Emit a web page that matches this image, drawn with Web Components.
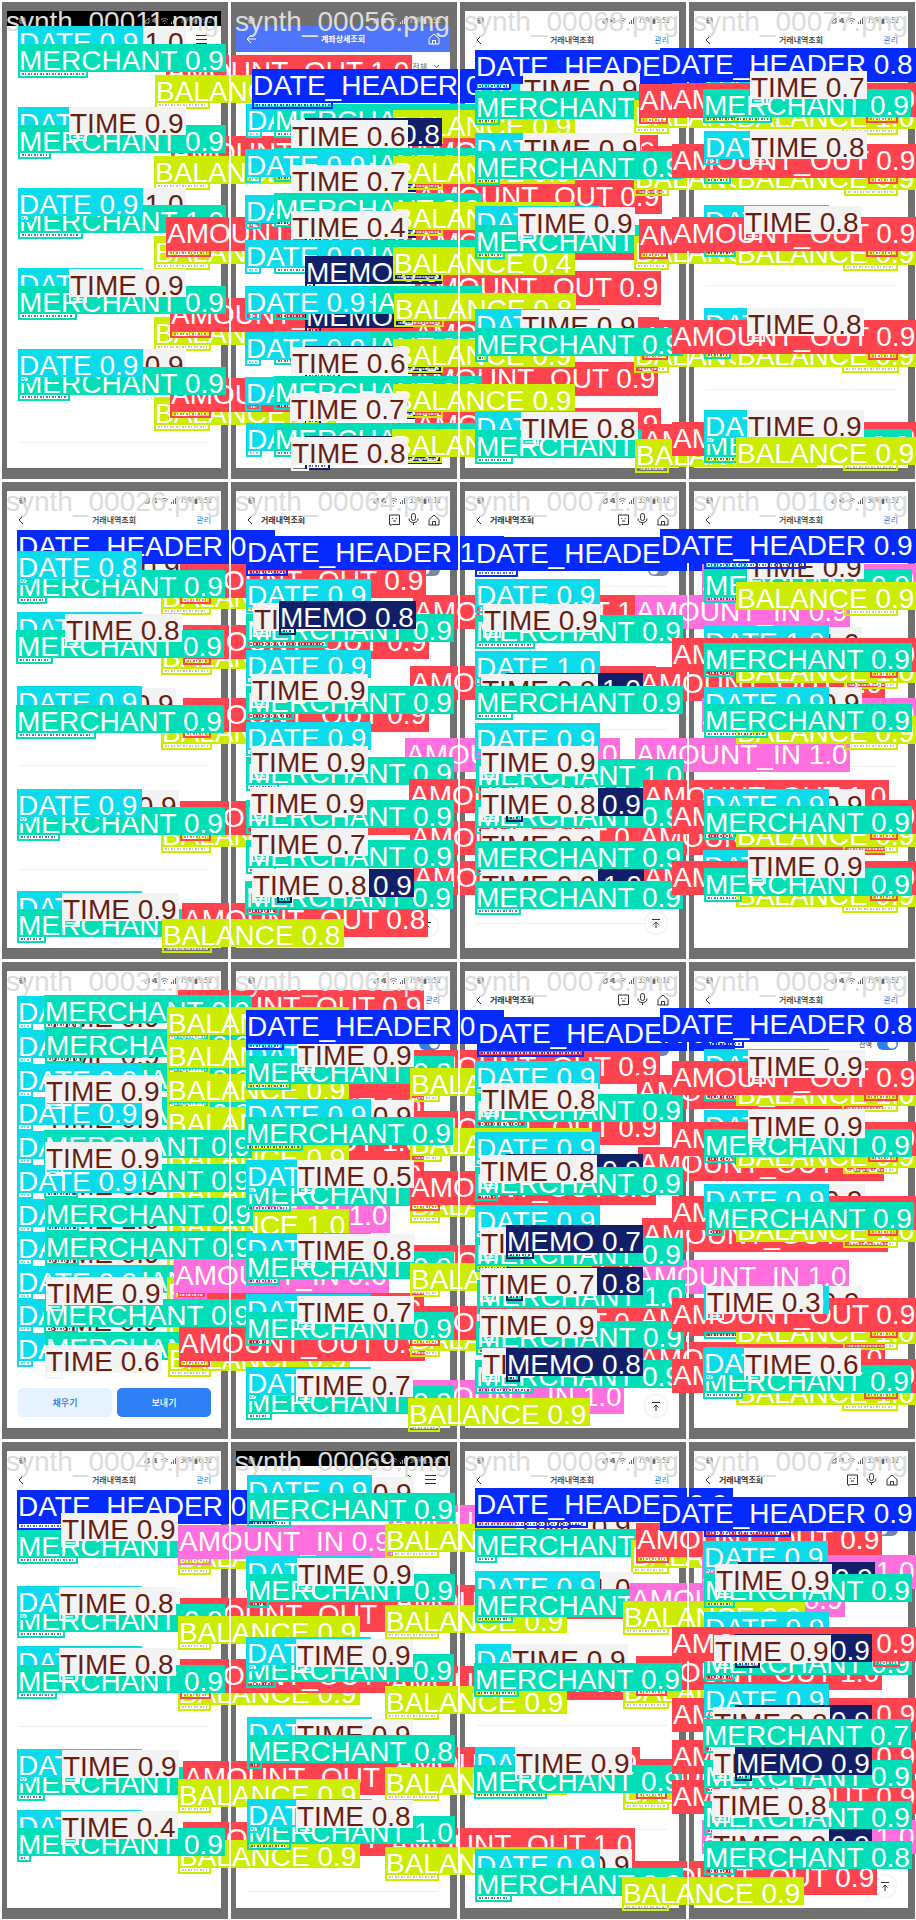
<!DOCTYPE html>
<html lang="ko">
<head>
<meta charset="utf-8">
<meta name="viewport" content="width=device-width, initial-scale=1">
<title>Validation batch predictions</title>
<style>
  body { margin: 0; background: #fff; font-family: "Liberation Sans", Arial, sans-serif; overflow-x: hidden; }
</style>
</head>
<body>
<batch-mosaic></batch-mosaic>

<template id="tpl-label">
  <style>
    :host { position: absolute; display: block; font: 28px/32px "Liberation Sans", Arial, sans-serif; white-space: nowrap; }
    .box { position: absolute; box-sizing: border-box; height: 8px; border: 2px solid var(--fill); }
    .box::before { content: ""; display: block; height: 2px; margin: 1px 2px; opacity: .7;
      background: repeating-linear-gradient(90deg, var(--ink) 0 2px, #fff 2px 3px, var(--ink) 3px 4px, #fff 4px 6px); }
    .tag { position: relative; box-sizing: border-box; padding: 1px 0 0 1px; background: var(--fill); color: var(--text); }
  </style>
  <div class="box"></div>
  <div class="tag"></div>
</template>

<template id="tpl-screen">
  <style>
    :host { display: flex; flex-direction: column; box-sizing: border-box; background: #fff; color: #333;
      font: 8px/12px "Noto Sans CJK KR", sans-serif; overflow: hidden; }
    .status { display: flex; justify-content: space-between; align-items: center; height: 15px; padding: 3px 9px 0 12px; box-sizing: border-box; font-size: 7px; color: #666; }
    .status svg { height: 7px; display: block; }
    .status span { display: flex; align-items: center; gap: 2px; }
    header { display: grid; grid-template-columns: 1fr auto 1fr; align-items: center; height: 27px; padding: 0 10px; }
    header svg { display: block; }
    h2 { margin: 0; font: inherit; font-weight: 500; color: #333; }
    a { color: #2f80d8; text-decoration: none; justify-self: end; }
    header.tools { display: flex; gap: 7px; }
    header.tools h2 { flex: 1; font-weight: 700; }
    header.tools .tool { margin-left: 2px; }
    :host([look="bank"]) .status { background: #707070; color: #ddd; }
    :host([look="bank"]) header { background: #4f76fa; color: #fff; height: 26px; }
    :host([look="bank"]) h2 { color: #fff; font-weight: 700; }
    :host([look="menu"]) .status, :host([look="menuhome"]) .status { background: #000; color: #aaa; }
    .end { justify-self: end; display: flex; gap: 11px; }
    .filter { height: 47px; display: flex; justify-content: flex-end; padding: 0 10px; box-sizing: border-box; align-items: flex-start; gap: 6px; }
    .filter.bank { padding-top: 7px; color: #666; align-items: center; height: 22px; }
    .filter label { display: flex; align-items: center; gap: 5px; padding-top: 25px; font-size: 7px; }
    .filter.low label { padding-top: 31px; }
    input { appearance: none; margin: 0; width: 21px; height: 12px; border-radius: 6px; background: radial-gradient(circle at 15px 6px, #fff 4px, #2f80e8 5px); }
    .low input { background: radial-gradient(circle at 6px 6px, #fff 4px, #7a86a0 5px); }
    .rule { box-sizing: border-box; margin: 0 12px; border-bottom: 1px solid #f0f0f0; }
    footer { margin-top: auto; display: flex; gap: 5px; padding: 0 10px 11px 11px; }
    footer button { flex: 1; height: 29px; border: 0; border-radius: 5px; padding: 0; font: 500 9px/12px "Noto Sans CJK KR", sans-serif; background: #e6f2ff; color: #2f6fd0; }
    footer button.main { background: #2f80f6; color: #fff; }
    footer.top { justify-content: flex-end; padding-right: 12px; }
    footer.top button { flex: none; width: 22px; height: 22px; border-radius: 11px; background: #fff; color: #333; box-shadow: 0 0 2px #ccc; display: grid; place-items: center; }
  </style>
  <div class="status"><span class="l"></span><span class="r"></span></div>
</template>

<template id="tpl-tile">
  <style>
    :host { position: relative; display: flex; aspect-ratio: 229 / 480; background: #707070; box-sizing: border-box; padding: 11px 8px 12px 7px; min-width: 0; }
    phone-screen { flex: 1; min-width: 0; }
    .layer { position: absolute; inset: 0; z-index: 1; box-sizing: border-box; border: solid #fff; border-width: 2px 1px 1px 2px; }
    .marks { position: absolute; left: -2px; top: -2px; }
    .name { position: absolute; left: 4px; top: 4px; font: 28px/32px "Liberation Sans", Arial, sans-serif; color: #dcdcdc; white-space: nowrap; }
  </style>
  <phone-screen></phone-screen>
  <div class="layer"><div class="name"></div><div class="marks"></div></div>
</template>

<script>
const KINDS = {
  H: { text: 'DATE_HEADER', fill: '#042aff', w: 258, h: 34, box: 40 },
  D: { text: 'DATE', fill: '#0bdbeb', w: 125, h: 28, box: 16 },
  T: { text: 'TIME', fill: '#f3f3f3', color: '#681f11', w: 117, h: 28, box: 18 },
  M: { text: 'MERCHANT', fill: '#00dfb7', w: 208, h: 28, box: 34, ink: '#245' },
  E: { text: 'MEMO', fill: '#111f68', w: 137, h: 28, box: 16 },
  I: { text: 'AMOUNT_IN', fill: '#ff6fdd', w: 215, h: 34, box: 33 },
  O: { text: 'AMOUNT_OUT', fill: '#ff444f', w: 246, h: 34, box: 31 },
  B: { text: 'BALANCE', fill: '#cced00', w: 182, h: 28, box: 54, ink: '#aa9' }
};

/* One entry per image, column by column. Each mark: kind, score, x, y, [box width, box x]. */
const TILES = [
 { name: '00011', look: 'menu', rules: [442], marks: `
  O 1.0 166 55|T 1.0 69 26|D 0.9 18 26|M 0.9 18 44 70|B 0.9 155 75 55
  D 0.9 18 107|O 0.9 171 136|M 0.9 18 125 33|B 0.9 154 156 56|T 0.9 69 107
  T 1.0 69 188|M 1.0 18 205 65|B 0.9 154 236 56|D 0.9 18 188|O 0.9 166 217 45
  D 0.9 18 268|B 0.9 154 317 57|O 0.9 170 298 41|M 0.9 18 286 59|T 0.9 69 269
  T 0.9 69 349|B 0.9 154 397 56|O 0.9 170 378 41|M 0.9 18 367 52|D 0.9 18 349` },
 { name: '00026', look: 'manage', rules: [285, 389], marks: `
  T 0.9 65 71|B 0.9 161 101 50|O 0.9 180 84|H 0.9 17 50|M 0.9 17 90 30|D 0.8 17 71
  D 0.9 17 132|B 0.9 161 161 51|O 0.9 183 145 28|M 0.9 16 150 37|T 0.8 65 134
  T 0.9 59 208|D 0.9 17 206|B 0.9 161 236 51|O 0.9 183 218 28|M 0.9 16 225 80
  T 0.9 62 310|B 0.9 161 339 50|O 0.9 180 321|M 0.9 17 327 43|D 0.9 17 309
  D 0.9 17 411|M 0.9 17 429 29|O 0.8 182 423|T 0.9 62 413|B 0.8 162 439 50` },
 { name: '00031', look: 'none', footer: 'pair', marks: `
  O 0.9 178 30|O 0.9 178 98|O 1.0 178 131|O 1.0 178 165|O 0.9 178 198|I 1.0 175 239
  T 0.9 45 41|D 0.9 17 36|M 0.9 44 35 38|T 0.9 45 79|D 0.9 17 70|M 0.9 45 69 38|B 0.9 167 47 43
  M 0.9 45 103|D 0.9 17 104|B 0.9 167 80 43
  M 0.9 45 137|B 0.9 167 114 43|T 0.9 45 142|D 0.9 17 137|B 0.9 167 147 43|T 0.9 45 115
  B 0.9 167 182 43|D 0.9 17 171|M 0.9 44 170
  B 0.9 167 216 43|T 0.9 45 209|M 0.9 44 204|D 0.9 17 205|T 0.9 45 182
  B 1.0 167 249 43|T 1.0 45 243|D 0.9 17 239|M 0.9 45 238
  B 0.9 167 283 43|T 0.9 45 277|D 0.9 17 272|M 0.9 45 271
  M 0.9 45 305|D 0.9 17 306|B 0.9 167 317 43|O 0.9 178 333|I 0.6 174 299
  B 0.9 167 350 43|T 0.9 44 345|D 0.9 17 339|M 0.9 44 339|T 0.9 46 317
  D 0.9 17 373|M 0.9 45 372|B 0.9 168 383 43|O 0.9 179 367|T 0.6 45 385` },
 { name: '00040', look: 'manage', time: '36%▮6:32', rules: [286], marks: `
  H 0.9 17 50 61|M 0.9 17 90 61|B 0.9 178 101 33|I 0.9 178 85|T 0.9 61 73
  O 0.9 180 158|M 0.9 17 164 48|D 0.9 17 146|B 0.9 178 176 33|T 0.8 59 147
  D 0.9 17 206|B 0.9 178 237 33|O 0.9 180 219|M 0.9 17 225 40|T 0.8 59 208
  M 0.9 17 327 28|D 0.9 17 309|O 0.9 183 321|B 0.9 178 339 33|T 0.9 62 310
  D 0.9 17 370|O 0.9 183 382|B 0.9 178 400 33|M 0.9 17 388 14|T 0.4 61 371` },
 { name: '00056', look: 'bank', marks: `
  E 0.9 76 164|E 0.9 76 210|E 0.9 76 391|E 0.9 76 300|O 0.9 183 135|O 0.9 187 180|O 0.9 187 226|O 0.9 186 271|O 0.9 184 317|O 0.9 183 362|O 0.9 186 408
  D 0.9 17 104|M 0.9 45 104|B 0.9 164 110 50|E 0.8 76 118 25|T 0.6 62 120
  M 0.9 45 148|D 0.9 16 149|B 0.9 164 156 50|T 0.7 62 165
  D 0.9 16 195|M 0.9 45 193|B 0.9 164 202 50|T 0.4 62 211
  M 0.9 45 240|D 0.9 16 240|E 0.9 76 256 10|B 0.4 164 247 50
  M 0.9 45 286|D 0.9 16 286|B 0.8 165 293 50
  M 0.9 45 331|D 0.9 16 332|E 0.9 76 346 35|B 0.9 164 339 50|T 0.6 62 347
  D 0.9 16 377|M 0.9 45 376|B 0.9 164 384 50|T 0.7 61 393
  D 0.9 17 423|M 0.9 45 423|E 0.8 76 436 25|B 0.9 163 429 50|T 0.8 62 437|H 0.9 23 69 81` },
 { name: '00064', look: 'tools', low: true, footer: 'top', marks: `
  O 1.0 184 115|D 0.9 17 99|M 0.9 17 134 82|T 0.9 24 123|E 0.8 50 121 17|H 1.0 17 56 42
  O 0.9 181 186|D 0.9 17 170|M 0.9 17 206 48|T 0.9 22 194
  I 1.0 176 258|D 0.9 17 242|M 0.9 17 277 33|T 0.9 22 266
  O 0.9 180 299|O 0.9 181 341|M 0.9 17 320 30|T 0.9 21 307
  O 0.9 184 381|M 0.9 17 360 30|T 0.7 22 348
  M 0.9 16 401 34|E 0.9 48 389 15|T 0.8 23 389` },
 { name: '00061', look: 'manage', toggle: true, marks: `
  O 0.9 185 90|D 0.9 17 79|M 0.9 17 96 45|T 0.9 68 79|H 0.9 17 50 38|B 0.9 181 108 30
  O 0.9 185 151|T 0.9 68 140|D 0.9 17 139|B 0.9 181 168 32|M 0.9 16 157 58
  M 0.9 17 218 45|D 0.9 17 200|B 0.9 181 229 30|O 0.9 181 211 30|T 0.5 68 200
  O 0.9 185 285|D 0.9 17 273|M 0.9 17 291 34|B 0.9 181 303 30|T 0.8 68 274
  D 0.9 17 334|B 0.9 181 363 30|O 0.9 181 346 30|M 0.9 17 352 25|T 0.7 68 336
  I 1.0 180 420|M 0.9 17 426 26|D 0.9 17 407|T 0.7 67 409|B 0.9 179 438 32` },
 { name: '00069', look: 'menuhome', time: '36%▮1:12', rules: [451], marks: `
  I 0.9 160 65|T 0.9 68 37|D 0.9 18 35|M 0.9 18 53 44|B 0.9 156 84
  O 0.9 165 145|D 0.9 17 116|M 0.9 18 134 22|B 0.9 156 165|T 0.9 68 118
  O 0.9 160 226|M 0.9 17 214 30|D 0.9 17 197|B 0.9 156 246|T 0.9 67 199
  O 0.9 165 307|D 0.9 18 277|T 0.9 67 279|M 0.8 18 295 15|B 0.9 156 327
  O 1.0 160 388|M 1.0 18 376 44|D 0.9 18 359|B 0.9 156 407|T 0.8 67 360` },
 { name: '00068', look: 'manage', marks: `
  D 0.9 17 73|H 0.9 17 50 36|T 0.9 65 73|M 0.9 17 91 25|B 0.9 176 100 35|O 0.9 181 84 29
  O 0.9 184 146 26|D 0.9 17 133|T 0.9 65 133|B 0.9 176 162 35|M 0.9 17 151 25
  D 0.9 17 206|M 0.9 17 225 30|B 0.9 176 236 35|O 0.9 181 219 29|T 0.9 60 207
  D 0.9 17 309|T 0.9 63 310|B 0.9 176 339 35|O 0.9 184 320 26|M 0.9 17 328 13
  D 0.9 17 411|M 0.9 17 430 38|O 0.9 184 424|T 0.8 63 412|B 0.9 177 439 34` },
 { name: '00071', look: 'tools', low: true, footer: 'top', rules: [106, 249, 443], marks: `
  I 0.9 177 115|D 0.9 17 99|M 0.9 17 135 60|T 0.9 25 124|H 0.9 17 57 43
  O 0.9 181 187 30|D 1.0 17 171|E 1.0 48 193|T 0.9 23 194|M 0.9 17 206 38
  I 1.0 177 258|D 0.9 17 243|M 1.0 18 279|T 0.9 23 266
  O 1.0 185 300|O 0.9 181 341|M 0.9 17 320|E 0.9 48 308 17|T 0.8 23 308
  O 0.9 185 381 26|T 0.9 23 349|M 0.9 17 361
  E 1.0 49 389|T 0.9 23 389|M 0.9 17 401 46` },
 { name: '00073', look: 'tools', low: true, footer: 'top', marks: `
  O 0.9 179 115|D 0.9 17 101|M 0.9 17 134 52|T 0.8 23 123|H 0.9 19 57 107
  O 0.9 180 187|D 0.9 17 172|E 0.9 48 194|M 0.9 17 207 23|T 0.8 22 195
  O 0.9 184 258|I 1.0 176 300|D 0.9 17 245|M 0.9 17 278|T 0.9 22 267|E 0.7 48 265 28
  O 0.9 181 342|M 1.0 19 320|E 0.8 48 307 17|T 0.7 22 308
  O 1.0 181 382|M 0.9 18 361|T 0.9 22 349
  M 0.9 17 400 59|T 0.9 24 388|E 0.8 48 388 14` },
 { name: '00067', look: 'manage', rules: [285, 389], marks: `
  T 0.9 58 70|H 0.9 17 48 113|M 0.9 17 89 22|B 0.9 173 100 38|O 0.9 178 83 33
  T 1.0 58 132|D 0.9 17 131|M 0.9 17 149 38|I 0.9 172 143|B 0.9 165 161 46
  D 0.9 17 204|T 0.9 53 204|B 0.9 165 235 46|O 1.0 178 216|M 0.9 16 223 45
  B 0.9 165 336 46|O 0.9 178 319|D 0.9 17 307|M 0.9 16 325 73|T 0.9 57 307
  O 0.9 173 421|T 0.9 57 409|D 0.9 17 409|M 0.9 17 428 37|B 0.9 164 437 47` },
 { name: '00077', look: 'manage', rules: [285, 389], marks: `
  D 0.9 17 71|H 0.8 -27 48 65 17|B 1.0 49 101 56 155|O 0.9 -15 83 32 179|M 0.9 16 89 69|T 0.7 63 71
  M 0.9 17 150 27|B 0.9 49 162 54 157|O 0.9 -15 144 30 181|D 0.9 17 131|T 0.8 63 131
  D 0.9 17 205|M 0.9 17 223 32|B 0.9 49 237 55 156|O 0.9 -15 217 32 179|T 0.8 57 206
  D 0.9 17 308|M 0.9 17 325 27|B 0.9 49 339 57 155|O 0.9 -15 320 30 181|T 0.8 60 308
  O 0.9 -15 422 30 181|M 0.9 17 429|D 0.9 17 410|T 0.9 60 410|B 0.9 49 437 55 156` },
 { name: '00108', look: 'manage', time: '36%▮6:32', rules: [286], marks: `
  I 0.9 15 84 30 181|D 0.9 17 71|M 0.9 17 89 40|T 0.9 60 71|H 0.9 -27 49 102 17|B 0.9 49 102 54 157
  T 1.0 58 147|D 1.0 17 146|B 1.0 49 175 54 157|O 0.9 -15 158 28 183|M 0.9 17 163 31
  I 1.0 15 218 30 181|T 0.9 58 207|D 0.9 17 207|B 0.9 49 236 54 157|M 0.9 17 224 64
  B 0.9 49 339 55 156|O 0.9 -15 320 28 183|T 0.9 61 309|D 0.9 17 309|M 0.9 17 326 31
  D 0.9 16 370|B 0.9 49 399 56 155|O 0.9 -15 381 28 183|M 0.9 17 388 38|T 0.9 61 370` },
 { name: '00087', look: 'manage', toggle: true, marks: `
  D 0.9 17 89|M 0.9 17 107 69|B 1.0 49 118 56 155|O 0.9 -15 101 34 177|T 0.9 61 90|H 0.8 -27 48 40 17
  D 0.9 17 150|B 0.9 49 180 55 156|O 0.9 -15 162 30 181|M 0.9 17 169 31|T 0.9 61 150
  T 0.9 61 224|B 1.0 49 254 55 156|O 0.9 -15 236 30 181|D 0.9 17 224|M 0.9 19 242 18
  T 0.9 58 326|M 0.9 17 345 82|B 1.0 49 356 55 156|O 0.9 -15 338 28 183|D 0.9 17 326|T 0.3 19 326
  B 1.0 49 417 56 155|O 0.9 -15 399 34 177|M 0.9 16 405 40|D 0.9 16 387|T 0.6 57 388` },
 { name: '00079', look: 'tools', low: true, footer: 'top', marks: `
  I 1.0 15 115 30 181|D 0.9 16 101|E 0.9 51 122|M 0.9 17 134 31|T 0.9 28 124|H 0.9 -27 57 87 17
  D 0.9 17 172|M 0.9 17 207 31|O 0.9 -15 187 27 186|E 0.9 48 194 25|T 0.9 27 195
  O 0.9 -15 258 27 186|O 0.9 -15 300 27 186|D 0.9 17 244|E 0.9 48 265|T 0.8 26 267|M 0.7 16 279 26
  O 0.9 -15 340 27 186|M 0.9 17 320|T 0.9 26 307|E 0.9 48 307 17
  I 1.0 15 380 27 186|M 0.9 17 361 26|T 0.8 25 349
  E 0.9 48 389|T 0.9 25 389|M 0.8 17 401 31` }
];

const svg = (w, h, body) => `<svg width="${w}" height="${h}" viewBox="0 0 ${w} ${h}" fill="none" stroke="currentColor" stroke-width="1" aria-hidden="true">${body}</svg>`;
const ICON = {
  back: svg(8, 10, '<path d="M6 1L2 5l4 4"/>'),
  arrow: svg(10, 10, '<path d="M5 1L1 5l4 4M1 5h9"/>'),
  chat: svg(13, 12, '<path d="M1.500 1h10v9.500h-7l-2 1v-1h-1zM4.500 4l.5 1M8 5l.5-1M5 7h3"/>'),
  mic: svg(11, 13, '<rect x="3.500" y=".5" width="4" height="7" rx="2"/><path d="M1 5.500c0 5.500 9 5.500 9 0M5.500 9.700V12"/>'),
  home: svg(12, 12, '<path d="M1 5.500L6 1l5 4.500V11H1zM4.500 11V7.500h3V11"/>'),
  menu: svg(11, 11, '<path d="M0 1.500h11M0 5.500h11M0 9.500h11"/>'),
  down: svg(7, 5, '<path d="M1 1l2.500 2.500L6 1"/>'),
  top: svg(8, 9, '<path d="M0 .5h8M4 9V3M1.500 5.500L4 3l2.500 2.500"/>'),
  note: svg(7, 7, '<path d="M1 1h5v5H1zM1 3.500h5M3 1v5"/>'),
  signal: svg(34, 7, '<path d="M0 5.500L5 1v5H1M9 2v3l3-4v5L9 4M10 1l3 5M17 3c2-2 5-2 7 0M18.500 4.500c1-1 3-1 4 0M20.500 6v1M27.500 5v2M29.500 3v4M31.500 1v6"/>')
};

class DetLabel extends HTMLElement {
  connectedCallback() {
    const [kind, score, x, y, bw, bx] = this.mark;
    const k = KINDS[kind];
    const root = this.attachShadow({ mode: 'open' });
    root.append(document.getElementById('tpl-label').content.cloneNode(true));
    this.style.cssText = `left:${x}px;top:${y}px;--fill:${k.fill};--text:${k.color || '#fff'};--ink:${k.ink || k.fill}`;
    const tag = root.querySelector('.tag');
    tag.textContent = `${k.text} ${score}`;
    tag.style.cssText = `width:${k.w}px;height:${k.h}px`;
    root.querySelector('.box').style.cssText =
      `left:${bx === undefined ? 0 : bx - x}px;top:${k.h - 2}px;width:${bw || k.box}px`;
  }
}

class PhoneScreen extends HTMLElement {
  connectedCallback() {
    const t = this.tile, look = t.look;
    this.setAttribute('look', look);
    const root = this.attachShadow({ mode: 'open' });
    root.append(document.getElementById('tpl-screen').content.cloneNode(true));
    root.querySelector('.l').innerHTML = ICON.note;
    root.querySelector('.r').innerHTML = ICON.signal + (t.time || (look === 'tools' ? '33%▮6:12' : '79%▮9:52'));
    let html = '';
    if (look === 'manage') html += `<header>${ICON.back}<h2>거래내역조회</h2><a href="#">관리</a></header>`;
    if (look === 'tools') html += `<header class="tools">${ICON.back}<h2>거래내역조회</h2><span class="tool">${ICON.chat}</span>${ICON.mic}<span class="tool">${ICON.home}</span></header>`;
    if (look === 'bank') html += `<header>${ICON.arrow}<h2>계좌상세조회</h2><span class="end">${ICON.home}</span></header><div class="filter bank">전체 ${ICON.down}</div>`;
    if (look === 'menu') html += `<header><i></i><i></i><span class="end" style="padding:0 4px">${ICON.menu}</span></header>`;
    if (look === 'menuhome') html += `<header><i></i><i></i><span class="end" style="padding:0 4px">${ICON.home}${ICON.menu}</span></header>`;
    if (look === 'none') html += '<header></header>';
    if (look !== 'bank') {
      const sw = t.toggle || t.low ? `<label>${t.toggle ? '잔액' : ''}<input type="checkbox" role="switch" aria-label="잔액"></label>` : '';
      html += `<div class="filter${t.low ? ' low' : ''}">${sw}</div>`;
    }
    let at = 100;
    for (const y of t.rules || []) { html += `<div class="rule" style="height:${y - at + 1}px"></div>`; at = y + 1; }
    if (t.footer === 'pair') html += '<footer><button>채우기</button><button class="main">보내기</button></footer>';
    if (t.footer === 'top') html += `<footer class="top"${t.rules ? ' style="margin-top:-12px"' : ''}><button aria-label="맨 위로">${ICON.top}</button></footer>`;
    root.append(document.createRange().createContextualFragment(html));
  }
}

class ScanTile extends HTMLElement {
  connectedCallback() {
    const root = this.attachShadow({ mode: 'open' });
    const part = document.getElementById('tpl-tile').content.cloneNode(true);
    part.querySelector('phone-screen').tile = this.tile;
    part.querySelector('.name').textContent = `synth_${this.tile.name}.png`;
    const marks = part.querySelector('.marks');
    for (const m of this.tile.marks.trim().split(/\s*[|\n]\s*/)) {
      const f = m.split(' ');
      const el = document.createElement('det-label');
      el.mark = [f[0], f[1], ...f.slice(2).map(Number)];
      marks.append(el);
    }
    root.append(part);
  }
}

class BatchMosaic extends HTMLElement {
  connectedCallback() {
    const root = this.attachShadow({ mode: 'open' });
    root.innerHTML = `<style>
      :host { display: grid; grid-auto-flow: column; grid-template-rows: repeat(4, auto); grid-auto-columns: minmax(0, 1fr); overflow: hidden; }
    </style>`;
    for (const tile of TILES) {
      const el = document.createElement('scan-tile');
      el.tile = tile;
      root.append(el);
    }
  }
}

customElements.define('det-label', DetLabel);
customElements.define('phone-screen', PhoneScreen);
customElements.define('scan-tile', ScanTile);
customElements.define('batch-mosaic', BatchMosaic);
</script>
</body>
</html>
